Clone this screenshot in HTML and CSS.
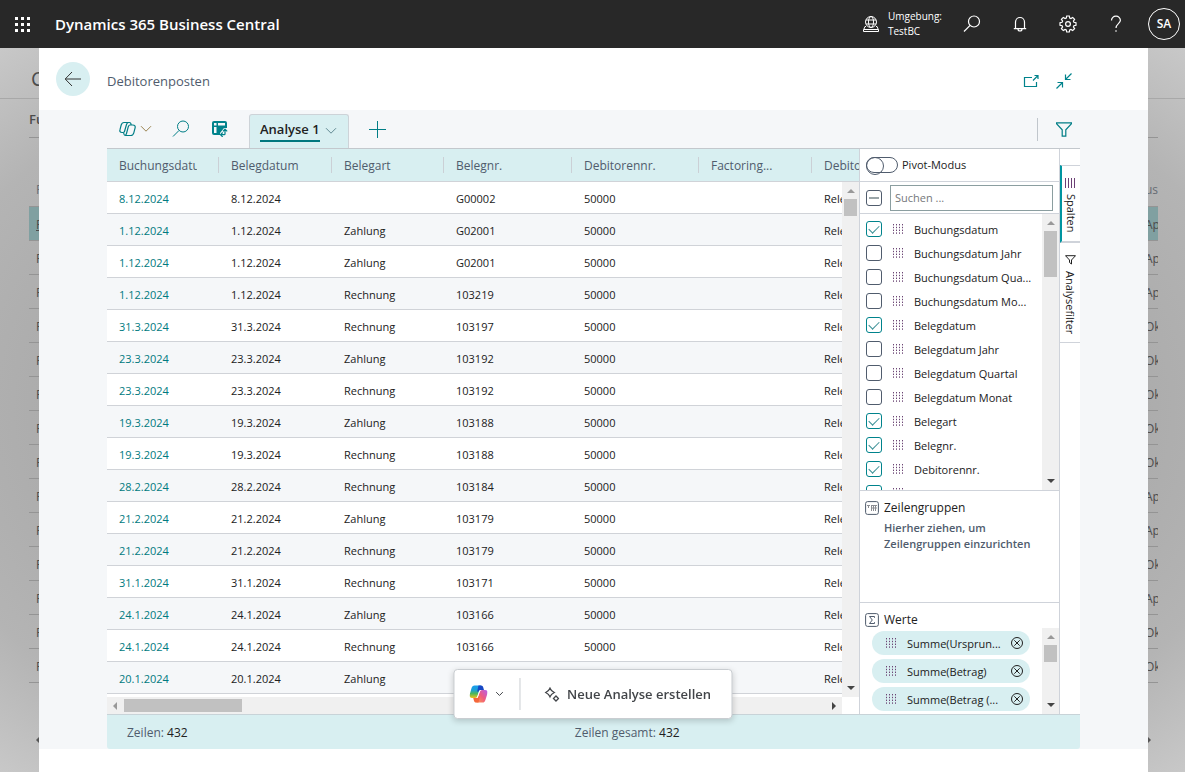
FILE: index.html
```html
<!DOCTYPE html>
<html lang="de">
<head>
<meta charset="utf-8">
<meta name="viewport" content="width=device-width, initial-scale=1">
<title>Debitorenposten - Dynamics 365 Business Central</title>
<link rel="stylesheet" href="styles.css">
</head>
<body>
<svg class="sprite" aria-hidden="true">
  <symbol id="search" viewBox="0 0 18 18"><circle cx="11" cy="6.500" r="5.500"/><path d="M7.100 10.400 1 16.500"/></symbol>
  <symbol id="chevron" viewBox="0 0 12 8"><path d="m1 1.200 5 5 5-5"/></symbol>
  <symbol id="drag" viewBox="0 0 11 10"><path d="M.5 0v10M3.500 0v10M6.500 0v10M9.500 0v10" stroke-dasharray="1.400 1.400"/></symbol>
  <symbol id="up" viewBox="0 0 8 8"><path d="M0 6h8L4 2z"/></symbol>
  <symbol id="down" viewBox="0 0 8 8"><path d="M0 2h8L4 6z"/></symbol>
  <symbol id="left" viewBox="0 0 8 8"><path d="M6 0v8L2 4z"/></symbol>
  <symbol id="right" viewBox="0 0 8 8"><path d="M2 0v8l4-4z"/></symbol>
  <symbol id="remove" viewBox="0 0 12 12"><circle cx="6" cy="6" r="5.500"/><path d="m3.300 3.300 5.400 5.400M8.700 3.300 3.300 8.700"/></symbol>
  <symbol id="funnel" viewBox="0 0 16 15"><path d="M.5 .8h15v.8L9.800 7.800v6.400H6.200V7.800L.5 1.600z"/></symbol>
</svg>

<header class="topbar">
  <button class="tb-btn waffle" aria-label="App-Startfeld"><svg width="16" height="16" viewBox="0 0 16 16"><path d="M0 1h3v3H0zM6 1h3v3H6zM12 1h3v3h-3zM0 7h3v3H0zM6 7h3v3H6zM12 7h3v3h-3zM0 13h3v3H0zM6 13h3v3H6zM12 13h3v3h-3z"/></svg></button>
  <a class="brand" href="#">Dynamics 365 Business Central</a>
  <div class="env">
    <svg class="line" width="16" height="16" viewBox="0 0 16 16"><circle cx="8" cy="6" r="5.500"/><ellipse cx="8" cy="6" rx="2.500" ry="5.500"/><path d="M3 4h10M3 8h10M3 10.500H2L.5 14v1.500h15V14L14 10.500h-1M1 13.500h14"/></svg>
    <div class="env-text"><div>Umgebung:</div><div>TestBC</div></div>
  </div>
  <button class="tb-btn" aria-label="Suchen"><svg class="line strong" width="18" height="18"><use href="#search"/></svg></button>
  <button class="tb-btn" aria-label="Benachrichtigungen"><svg class="line strong" width="14" height="16" viewBox="0 0 14 16"><path d="M2.500 12.500V6a4.500 4.500 0 0 1 9 0v6.500M.8 12.600h12.400M5 13a2 2 0 0 0 4 0"/></svg></button>
  <button class="tb-btn" aria-label="Einstellungen"><svg class="line strong" width="18" height="18" viewBox="0 0 18 18"><path d="M7.700 1h2.600l.4 2.100 1.200.5 1.800-1.200 1.900 1.900-1.200 1.800.5 1.200 2.100.4v2.600l-2.100.4-.5 1.200 1.200 1.800-1.900 1.900-1.800-1.200-1.200.5-.4 2.100H7.700l-.4-2.100-1.200-.5-1.800 1.200-1.900-1.900 1.200-1.800-.5-1.200L1 10.300V7.700l2.100-.4.5-1.200-1.200-1.800 1.900-1.900 1.800 1.200 1.200-.5z"/><circle cx="9" cy="9" r="2.400"/></svg></button>
  <button class="tb-btn" aria-label="Hilfe"><svg class="line strong" width="12" height="18" viewBox="0 0 12 18"><path d="M1.500 5.500A4.300 4.300 0 0 1 6 1.200a4.200 4.200 0 0 1 4.400 4.100C10.400 8.500 6 8.800 6 13M6 15.200v1.600"/></svg></button>
  <button class="avatar">SA</button>
</header>

<div class="behind" aria-hidden="true">
  <div class="behind-title">C</div>
  <div class="behind-body">
    <div class="behind-sub">Fu</div>
    <table class="behind-table">
      <thead><tr><th>F</th><th>us</th></tr></thead>
      <tbody>
        <tr class="current"><td>F</td><td>Ap</td></tr>
        <tr><td>F</td><td>Ap</td></tr><tr><td>F</td><td>Ap</td></tr>
        <tr><td>F</td><td>Ok</td></tr><tr><td>F</td><td>Ok</td></tr>
        <tr><td>F</td><td>Ok</td></tr><tr><td>F</td><td>Ok</td></tr>
        <tr><td>F</td><td>Ok</td></tr><tr><td>F</td><td>Ap</td></tr>
        <tr><td>F</td><td>Ap</td></tr><tr><td>F</td><td>Ok</td></tr>
        <tr><td>F</td><td>Ap</td></tr><tr><td>F</td><td>Ok</td></tr>
        <tr><td>F</td><td>Ok</td></tr>
      </tbody>
    </table>
    <div class="behind-scroll"><svg width="8" height="8"><use href="#left"/></svg><svg width="8" height="8"><use href="#right"/></svg></div>
  </div>
</div>

<main class="dialog">
  <header class="dialog-head">
    <button class="back" aria-label="Zurück"><svg class="line" width="18" height="16" viewBox="0 0 18 16"><path d="M17 8H1.500M8 1 1.200 8 8 15"/></svg></button>
    <h1>Debitorenposten</h1>
    <button class="icon-btn" aria-label="In neuem Fenster öffnen"><svg class="line strong" width="18" height="16" viewBox="0 0 18 16"><path d="M10 4.500H2.500v9h12V9M11 7.500 16 2.500M12.500 2.500H16V6"/></svg></button>
    <button class="icon-btn" aria-label="Verkleinern"><svg class="line strong" width="18" height="18" viewBox="0 0 18 18"><path d="M1.500 16.500l6-6M2.500 10.500h5v5M16.500 1.500l-6 6M10.500 2.500v5h5"/></svg></button>
  </header>

  <div class="work">
    <div class="toolbar">
      <button class="tool copilot" aria-label="Copilot"><svg class="line strong" width="17" height="16" viewBox="0 0 17 16"><path d="M5 1.500h5.500c1 0 1.300.6 1.500 1.500l.2 1h1.600c2 0 2.700 1.200 2.300 2.800l-1.300 5c-.5 1.700-1.400 2.700-3 2.700H6.500c-1 0-1.400-.5-1.600-1.500l-.3-1.500H3c-1.900 0-2.500-1.200-2-2.800l1.200-4.700C2.700 2.300 3.600 1.500 5 1.500zM9.500 1.500C8.200 1.500 7.800 2.500 7.500 3.500l-2 7c-.3 1-.8 1-1.500 1M12.500 4H11c-1 0-1.400.8-1.700 1.700l-1.800 6.800c-.3 1.200-.7 2-1.700 2"/></svg><svg class="line amber" width="12" height="8"><use href="#chevron"/></svg></button>
      <button class="tool find" aria-label="Suchen"><svg class="line" width="18" height="18"><use href="#search"/></svg></button>
      <button class="tool analyse" aria-label="Analysemodus"><svg width="16" height="16" viewBox="0 0 16 16"><path class="fill" d="M2 0h11a2 2 0 0 1 2 2v12H2a2 2 0 0 1-2-2V2a2 2 0 0 1 2-2z"/><path class="cut" d="M2 2h2.500v2.500H2zM6 2h7v2.500H6zM2 6h2.500v6H2zM8 12l4-5h4v9H8z"/><path class="pen" d="M13 8.500v4.500c0 .5-.2.700-.7.700H9M10.700 11.500 8.500 13.700l2.200 2.200M11 10.300l2-2.200 2.200 2.200"/></svg></button>
      <button class="sheet-tab"><span>Analyse 1</span><svg class="line" width="12" height="8"><use href="#chevron"/></svg></button>
      <button class="tool plus" aria-label="Neu"><svg class="line" width="17" height="17" viewBox="0 0 17 17"><path d="M8.500 0v17M0 8.500h17"/></svg></button>
      <button class="filter" aria-label="Filter"><svg class="line strong" width="16" height="15"><use href="#funnel"/></svg></button>
    </div>

    <div class="analysis">
      <section class="grid">
        <div class="grid-view">
          <table class="data">
            <colgroup><col class="c112"><col class="c113"><col class="c112"><col class="c128"><col class="c127"><col class="c113"><col class="c128"></colgroup>
            <thead><tr><th><span>Buchungsdatum</span></th><th><span>Belegdatum</span></th><th><span>Belegart</span></th><th><span>Belegnr.</span></th><th><span>Debitorennr.</span></th><th><span>Factoring...</span></th><th><span>Debitor</span></th></tr></thead>
            <tbody>
              <tr><td><a href="#">8.12.2024</a></td><td>8.12.2024</td><td></td><td>G00002</td><td>50000</td><td></td><td>Rele</td></tr>
              <tr><td><a href="#">1.12.2024</a></td><td>1.12.2024</td><td>Zahlung</td><td>G02001</td><td>50000</td><td></td><td>Rele</td></tr>
              <tr><td><a href="#">1.12.2024</a></td><td>1.12.2024</td><td>Zahlung</td><td>G02001</td><td>50000</td><td></td><td>Rele</td></tr>
              <tr><td><a href="#">1.12.2024</a></td><td>1.12.2024</td><td>Rechnung</td><td>103219</td><td>50000</td><td></td><td>Rele</td></tr>
              <tr><td><a href="#">31.3.2024</a></td><td>31.3.2024</td><td>Rechnung</td><td>103197</td><td>50000</td><td></td><td>Rele</td></tr>
              <tr><td><a href="#">23.3.2024</a></td><td>23.3.2024</td><td>Zahlung</td><td>103192</td><td>50000</td><td></td><td>Rele</td></tr>
              <tr><td><a href="#">23.3.2024</a></td><td>23.3.2024</td><td>Rechnung</td><td>103192</td><td>50000</td><td></td><td>Rele</td></tr>
              <tr><td><a href="#">19.3.2024</a></td><td>19.3.2024</td><td>Zahlung</td><td>103188</td><td>50000</td><td></td><td>Rele</td></tr>
              <tr><td><a href="#">19.3.2024</a></td><td>19.3.2024</td><td>Rechnung</td><td>103188</td><td>50000</td><td></td><td>Rele</td></tr>
              <tr><td><a href="#">28.2.2024</a></td><td>28.2.2024</td><td>Rechnung</td><td>103184</td><td>50000</td><td></td><td>Rele</td></tr>
              <tr><td><a href="#">21.2.2024</a></td><td>21.2.2024</td><td>Zahlung</td><td>103179</td><td>50000</td><td></td><td>Rele</td></tr>
              <tr><td><a href="#">21.2.2024</a></td><td>21.2.2024</td><td>Rechnung</td><td>103179</td><td>50000</td><td></td><td>Rele</td></tr>
              <tr><td><a href="#">31.1.2024</a></td><td>31.1.2024</td><td>Rechnung</td><td>103171</td><td>50000</td><td></td><td>Rele</td></tr>
              <tr><td><a href="#">24.1.2024</a></td><td>24.1.2024</td><td>Zahlung</td><td>103166</td><td>50000</td><td></td><td>Rele</td></tr>
              <tr><td><a href="#">24.1.2024</a></td><td>24.1.2024</td><td>Rechnung</td><td>103166</td><td>50000</td><td></td><td>Rele</td></tr>
              <tr><td><a href="#">20.1.2024</a></td><td>20.1.2024</td><td>Zahlung</td><td></td><td></td><td></td><td>Rele</td></tr>
            </tbody>
          </table>
          <div class="vscroll over"><svg class="dim" width="8" height="8"><use href="#up"/></svg><i class="thumb short"></i><svg width="8" height="8"><use href="#down"/></svg></div>
        </div>
        <div class="hscroll"><svg class="dim" width="8" height="8"><use href="#left"/></svg><i class="hthumb"></i><svg width="8" height="8"><use href="#right"/></svg></div>
      </section>

      <aside class="panel">
        <label class="pivot"><input type="checkbox" role="switch" class="switch">Pivot-Modus</label>
        <div class="col-search"><input type="checkbox" class="box partial" aria-label="Alle Spalten"><input type="text" class="query" placeholder="Suchen ..." aria-label="Suchen"></div>
        <div class="scroll-area columns">
          <div class="col-list">
            <label class="col"><input type="checkbox" class="box" checked><svg class="drag" width="11" height="10"><use href="#drag"/></svg><span>Buchungsdatum</span></label>
            <label class="col"><input type="checkbox" class="box"><svg class="drag" width="11" height="10"><use href="#drag"/></svg><span>Buchungsdatum Jahr</span></label>
            <label class="col"><input type="checkbox" class="box"><svg class="drag" width="11" height="10"><use href="#drag"/></svg><span>Buchungsdatum Qua...</span></label>
            <label class="col"><input type="checkbox" class="box"><svg class="drag" width="11" height="10"><use href="#drag"/></svg><span>Buchungsdatum Mo...</span></label>
            <label class="col"><input type="checkbox" class="box" checked><svg class="drag" width="11" height="10"><use href="#drag"/></svg><span>Belegdatum</span></label>
            <label class="col"><input type="checkbox" class="box"><svg class="drag" width="11" height="10"><use href="#drag"/></svg><span>Belegdatum Jahr</span></label>
            <label class="col"><input type="checkbox" class="box"><svg class="drag" width="11" height="10"><use href="#drag"/></svg><span>Belegdatum Quartal</span></label>
            <label class="col"><input type="checkbox" class="box"><svg class="drag" width="11" height="10"><use href="#drag"/></svg><span>Belegdatum Monat</span></label>
            <label class="col"><input type="checkbox" class="box" checked><svg class="drag" width="11" height="10"><use href="#drag"/></svg><span>Belegart</span></label>
            <label class="col"><input type="checkbox" class="box" checked><svg class="drag" width="11" height="10"><use href="#drag"/></svg><span>Belegnr.</span></label>
            <label class="col"><input type="checkbox" class="box" checked><svg class="drag" width="11" height="10"><use href="#drag"/></svg><span>Debitorennr.</span></label>
            <label class="col"><input type="checkbox" class="box" checked><svg class="drag" width="11" height="10"><use href="#drag"/></svg><span>Factoring-Nachlauf</span></label>
          </div>
          <div class="vscroll"><svg class="dim" width="8" height="8"><use href="#up"/></svg><i class="thumb long"></i><svg width="8" height="8"><use href="#down"/></svg></div>
        </div>
        <section class="groups">
          <h2><svg class="line slate" width="14" height="14" viewBox="0 0 14 14"><rect x=".6" y=".6" width="12.800" height="12.800" rx="2"/><path class="muted" d="M2 4.500h3M3.500 4.500V7M6.500 4v6M8.500 4v6M10.500 4v6M6 4.500h6M6 7h6"/></svg>Zeilengruppen</h2>
          <p>Hierher ziehen, um Zeilengruppen einzurichten</p>
        </section>
        <section class="values">
          <h2><svg class="line slate" width="14" height="14" viewBox="0 0 14 14"><rect x=".6" y=".6" width="12.800" height="12.800" rx="2"/><path d="M9.500 4.800V3.500H4.500L7.300 7l-2.800 3.500h5V9.200"/></svg>Werte</h2>
          <div class="scroll-area">
            <div class="pills">
              <div class="pill"><svg class="drag" width="11" height="10"><use href="#drag"/></svg><span>Summe(Ursprun...</span><button aria-label="Entfernen"><svg class="line" width="12" height="12"><use href="#remove"/></svg></button></div>
              <div class="pill"><svg class="drag" width="11" height="10"><use href="#drag"/></svg><span>Summe(Betrag)</span><button aria-label="Entfernen"><svg class="line" width="12" height="12"><use href="#remove"/></svg></button></div>
              <div class="pill"><svg class="drag" width="11" height="10"><use href="#drag"/></svg><span>Summe(Betrag (...</span><button aria-label="Entfernen"><svg class="line" width="12" height="12"><use href="#remove"/></svg></button></div>
            </div>
            <div class="vscroll"><svg class="dim" width="8" height="8"><use href="#up"/></svg><i class="thumb short"></i><svg width="8" height="8"><use href="#down"/></svg></div>
          </div>
        </section>
      </aside>

      <nav class="side-tabs">
        <button class="side-tab active"><svg class="bars" width="11" height="10" viewBox="0 0 11 10"><path d="M.5 0v10M3.500 0v10M6.500 0v10M9.500 0v10"/></svg>Spalten</button>
        <button class="side-tab"><svg class="line" width="11" height="10" viewBox="0 0 11 10"><path d="M.5 .7h10L6.500 5v4L4.500 7.500V5z"/></svg>Analysefilter</button>
      </nav>
    </div>

    <footer class="status">
      <div class="stat-left">Zeilen: <b>432</b></div>
      <div>Zeilen gesamt: <b>432</b></div>
    </footer>
  </div>
</main>

<div class="floating">
  <button class="float-copilot" aria-label="Copilot-Optionen">
    <svg width="18" height="18" viewBox="0 0 18 18">
      <defs>
        <linearGradient id="ga" x1="0" y1="0" x2="0" y2="1"><stop offset="0" stop-color="#1a9cec"/><stop offset=".35" stop-color="#1aa0d8"/><stop offset=".65" stop-color="#4cb85a"/><stop offset="1" stop-color="#f2c21a"/></linearGradient>
        <linearGradient id="gb" x1="1" y1="0" x2="0" y2="1"><stop offset="0" stop-color="#b45ff0"/><stop offset=".5" stop-color="#ee5a80"/><stop offset="1" stop-color="#ff9a4a"/></linearGradient>
      </defs>
      <path fill="url(#ga)" d="M5 .5h6.500L8.500 10C8 12 7.200 13 5.500 13H2.800C.3 13 -.3 11.300.3 9.300L2 3.300C2.600 1.300 3.500.5 5 .5z"/>
      <path fill="#1747c4" d="M9 .5h2.700c1.200 0 1.600.7 2 1.800l.8 2.700H11.500C10 5 9.300 5.500 8.500 7.500L7.800 6z"/>
      <path fill="url(#gb)" d="M13 17.500H6.800L9.800 8c.6-2 1.300-3 3-3h2.600c2.500 0 3.100 1.700 2.500 3.700L16 14.700c-.6 2-1.500 2.800-3 2.800z"/>
      <path fill="#f4673c" d="M9 17.500H6.500c-1.200 0-1.600-.7-2-1.800L3.700 13h3C8.200 13 8.800 12.500 9.500 10.500l.8 1.500z"/>
      <path fill="#fff" d="M9.600 6 11 5.200 8.400 12.300 7.200 12.900z"/>
    </svg>
    <svg class="line" width="8" height="6" viewBox="0 0 12 8"><path stroke-width="1.500" d="m1 1.200 5 5 5-5"/></svg>
  </button>
  <button class="float-new"><svg class="line" width="15" height="15" viewBox="0 0 15 15"><path stroke-width="1.300" d="M5.500 1.200Q6.500 3.800 9.800 5.500 6.500 7.200 5.500 9.800 4.500 7.200 1.200 5.500 4.500 3.800 5.500 1.200zM11.500 9l2.500 2.500-2.500 2.500L9 11.500z"/></svg>Neue Analyse erstellen</button>
</div>
</body>
</html>
```

FILE: styles.css
```css
* { box-sizing: border-box; }
html, body { height: 100%; }
body {
  margin: 0;
  overflow: hidden;
  display: flex;
  flex-direction: column;
  font: 11px/16px "Open Sans", "Noto Sans", sans-serif;
  color: #212121;
  background: #b0b0b0;
}
button {
  font: inherit;
  color: inherit;
  background: none;
  border: 0;
  padding: 0;
  display: flex;
  align-items: center;
  justify-content: center;
}
input { margin: 0; font: inherit; }
a { text-decoration: none; color: #007a80; }
svg { display: block; flex: none; }
.sprite { position: absolute; width: 0; height: 0; }
.line { fill: none; stroke: currentColor; stroke-width: 1; }
.strong { stroke-width: 1.2; }

/* Top bar */
.topbar {
  flex: none;
  height: 48px;
  display: flex;
  align-items: center;
  color: #fff;
  background: #282828;
}
.waffle { fill: #fff; }
.tb-btn { width: 48px; height: 48px; }
.waffle.tb-btn { width: 45px; }
.brand { margin-left: 10px; font-size: 15px; font-weight: 600; color: #fff; }
.env { display: flex; align-items: center; gap: 9px; margin-left: auto; margin-right: 6px; }
.env-text { font-size: 10px; line-height: 15px; font-weight: 500; }
.avatar {
  width: 32px;
  height: 32px;
  margin: 0 5px 0 8px;
  border: 1px solid #fff;
  border-radius: 50%;
  font-size: 12px;
  font-weight: 600;
}

/* Page under the dialog */
.behind {
  flex: 1;
  color: #4c4c4c;
  background: radial-gradient(ellipse farthest-corner at center, #a4a4a4 0%, #acacac 65%, #b4b4b4 82%, #c8c8c8 100%);
  overflow: hidden;
}
.behind-title { height: 51px; padding: 16px 31px; font-size: 20px; line-height: 30px; border-bottom: 1px solid #a8a8a8; }
.behind-body { margin: 0 27px 0 29px; }
.behind-sub { height: 39px; padding-top: 12px; font-size: 13px; font-weight: 600; border-bottom: 1px solid #949494; }
.behind-table { width: 100%; margin-top: 34px; border-collapse: collapse; table-layout: fixed; font-size: 12px; }
.behind-table th, .behind-table td { height: 34px; padding: 3px 0 0 7px; text-align: left; font-weight: 400; border-bottom: 1px solid #949494; overflow: hidden; }
.behind-table th { color: #666c74; }
.behind-table th:last-child, .behind-table td:last-child { width: 13px; padding-left: 0; }
.behind-table .current { background: #80a0a1; }
.behind-table .current td:first-child { text-decoration: underline; }
.behind-scroll { display: flex; justify-content: space-between; margin-top: 49px; height: 17px; align-items: center; padding: 0 5px; fill: #555; }

/* Dialog */
.dialog {
  position: fixed;
  inset: 48px 37px 0 39px;
  display: flex;
  flex-direction: column;
  background: #fff;
}
.dialog-head { flex: none; height: 62px; display: flex; align-items: center; padding: 0 75px 0 17px; }
.back { width: 34px; height: 34px; border-radius: 50%; background: #d8eff1; color: #333; }
.dialog-head h1 { margin: 4px auto 0 17px; font-size: 13px; font-weight: 400; color: #505c6d; }
.icon-btn { color: #00838c; margin-left: 15px; margin-top: 4px; }
.work {
  flex: 1;
  min-height: 0;
  margin-bottom: 23px;
  padding: 0 68px;
  display: flex;
  flex-direction: column;
  background: #f5f7f9;
}
.toolbar { flex: none; height: 39px; display: flex; align-items: center; border-bottom: 1px solid #c3c8cd; color: #007e86; }
.copilot { gap: 4px; margin-left: 12px; }
.amber { color: #9a8350; }
.find { margin-left: 20px; }
.analyse { margin-left: 22px; }
.fill { fill: #00838c; }
.cut { fill: #f5f7f9; }
.pen { fill: none; stroke: #00838c; stroke-width: 1.2; }
.sheet-tab {
  align-self: flex-end;
  height: 34px;
  margin-left: 21px;
  padding: 0 11px 2px 10px;
  gap: 5px;
  border: 1px solid #cdd3d8;
  border-bottom: 0;
  border-radius: 3px 3px 0 0;
  background: #d8eff1;
  color: #212121;
}
.sheet-tab span { font-size: 13px; font-weight: 600; line-height: 21px; border-bottom: 2px solid #00777e; }
.sheet-tab svg { color: #628a93; }
.plus { margin-left: 20px; }
.filter { margin-left: auto; height: 23px; padding: 0 8px 0 18px; border-left: 1px solid #c0c6cc; }

/* Grid */
.analysis { flex: 1; min-height: 0; display: flex; background: #fff; }
.grid { flex: 1; min-width: 0; display: flex; flex-direction: column; }
.grid-view { flex: 1; min-height: 0; position: relative; overflow: hidden; }
.data { width: 833px; border-collapse: separate; border-spacing: 0; table-layout: fixed; }
.c112 { width: 112px; }
.c113 { width: 113px; }
.c127 { width: 127px; }
.c128 { width: 128px; }
.data th, .data td { padding: 0 0 0 12px; text-align: left; white-space: nowrap; border-bottom: 1px solid #d0d3d8; }
.data th {
  height: 33px;
  padding-top: 2px;
  font-size: 12px;
  font-weight: 400;
  color: #505c6d;
  background: linear-gradient(#cbd0d6, #cbd0d6) right center / 1px 16px no-repeat #d8eff1;
}
.data th span { display: block; overflow: hidden; margin-right: 22px; }
.data td { height: 32px; padding-top: 2px; }
.data tbody tr:nth-child(even) { background: #f5f7f9; }
.vscroll { flex: none; width: 17px; display: flex; flex-direction: column; align-items: center; padding: 5px 0; background: #f0f0f0; fill: #444; }
.vscroll svg:last-child { margin-top: auto; }
.over { position: absolute; top: 33px; right: 0; bottom: 0; }
.dim { fill: #999; }
.thumb { width: 13px; margin-top: 4px; background: #c1c1c1; }
.short { height: 17px; }
.long { height: 46px; }
.hscroll { flex: none; height: 17px; margin-right: 17px; padding: 0 4px; display: flex; align-items: center; background: #f0f0f0; fill: #444; }
.hthumb { width: 118px; height: 13px; margin: 0 auto 0 5px; background: #c1c1c1; }

/* Column panel */
.panel {
  flex: none;
  width: 201px;
  display: flex;
  flex-direction: column;
  border: 1px solid #cfd3da;
  border-width: 0 1px;
}
.pivot { height: 33px; padding-left: 6px; display: flex; align-items: center; gap: 4px; border-bottom: 1px solid #cfd3da; }
.switch { appearance: none; width: 32px; height: 16px; border: 1px solid #505c6d; border-radius: 8px; }
.switch::after { content: ""; display: block; width: 16px; height: 16px; margin: -1px; border: 1px solid #505c6d; border-radius: 50%; }
.col-search { height: 32px; padding: 0 6px; display: flex; align-items: center; gap: 8px; border-bottom: 1px solid #cfd3da; }
.box { appearance: none; flex: none; width: 16px; height: 16px; border: 1px solid #505c6d; border-radius: 3px; background: #fff; display: grid; place-items: center; }
.box:checked { border-color: #00838c; }
.box:checked::after { content: ""; width: 9px; height: 5px; margin-top: -3px; border: solid #3a8f95; border-width: 0 0 1px 1px; transform: rotate(-45deg); }
.partial::after { content: ""; width: 10px; height: 2px; background: #9aa5a8; }
.query { flex: 1; min-width: 0; height: 26px; padding: 0 4px; border: 1px solid #8b9ea0; color: #212121; }
.query::placeholder { color: #75777a; }
.scroll-area { display: flex; min-height: 0; overflow: hidden; }
.columns { flex: 1; border-bottom: 1px solid #cfd3da; }
.col-list { flex: 1; min-width: 0; padding: 3px 0 0 6px; }
.col { height: 24px; display: flex; align-items: center; white-space: nowrap; }
.col span, .pill span { padding-top: 1px; }
.drag { fill: none; stroke: #6c4675; margin: 0 10px 0 11px; }
.panel h2 { margin: 0; height: 25px; padding: 8px 0 0 5px; display: flex; align-items: center; gap: 5px; font-size: 12px; font-weight: 400; }
.slate { color: #505c6d; }
.muted { stroke: #8b8d92; }
.groups { flex: none; height: 112px; border-bottom: 1px solid #cfd3da; }
.groups p { margin: 4px 20px 0 24px; font-weight: 600; color: #505c6d; }
.values { flex: none; height: 111px; display: flex; flex-direction: column; }
.values .scroll-area { flex: 1; }
.pills { flex: 1; min-width: 0; padding: 3px 12px 0; display: flex; flex-direction: column; gap: 4px; }
.pill { flex: none; height: 24px; padding: 0 7px 0 3px; display: flex; align-items: center; border-radius: 12px; background: #d8eff1; white-space: nowrap; }
.pill button { margin-left: auto; }

/* Side tabs */
.side-tabs { flex: none; width: 20px; padding-top: 16px; }
.side-tab {
  width: 20px;
  padding: 12px 1px 8px 1px;
  gap: 6px;
  writing-mode: vertical-rl;
  justify-content: flex-start;
  border-bottom: 1px solid #cfd3da;
}
.side-tab.active { border-top: 1px solid #cfd3da; border-bottom-width: 2px; border-left: 2px solid #0095a0; padding-left: 0; }
.bars { stroke: #6c3f75; }

/* Footer */
.status { flex: none; height: 35px; padding: 2px 20px 0; display: flex; align-items: center; border-top: 1px solid #c8d3d8; border-radius: 0 0 3px 3px; background: #d8eff1; color: #505c6d; font-size: 12px; }
.stat-left { width: 48%; }
.status b { font-weight: 500; color: #212121; }

/* Floating Copilot bar */
.floating {
  position: fixed;
  left: 50%;
  bottom: 53px;
  transform: translateX(-50%);
  height: 50px;
  display: flex;
  align-items: center;
  border: 1px solid #c9cdd1;
  border-radius: 4px;
  background: #fff;
  box-shadow: 0 2px 6px rgba(0, 0, 0, .18);
  color: #424549;
}
.float-copilot { gap: 8px; height: 32px; padding: 0 16px 0 15px; border-right: 1px solid #c9cdd1; }
.float-new { gap: 8px; padding: 0 20px 0 24px; font-size: 13px; font-weight: 600; white-space: nowrap; }
```
